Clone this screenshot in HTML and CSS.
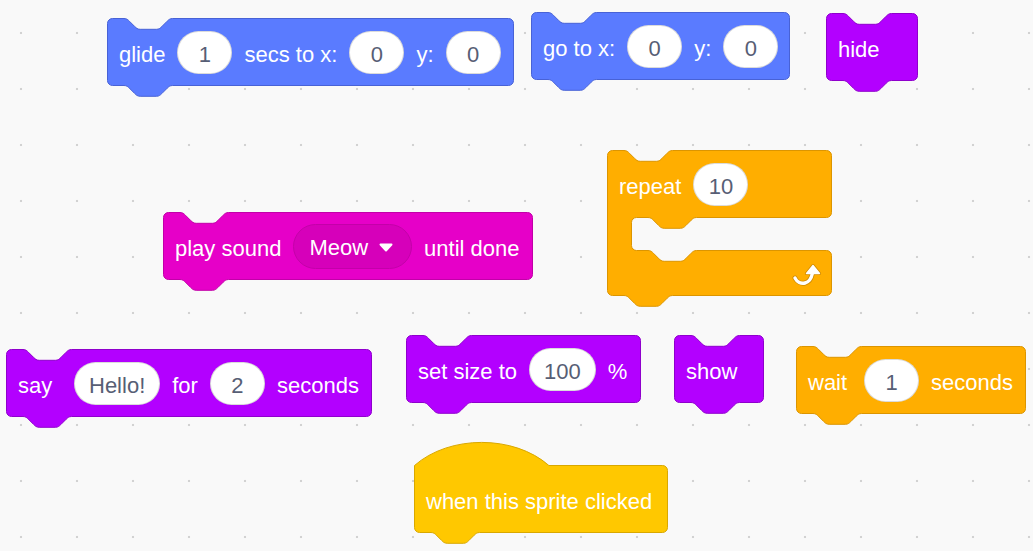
FILE: index.html
```html
<!DOCTYPE html>
<html>
<head>
<meta charset="utf-8">
<title>Blocks</title>
<link rel="stylesheet" href="styles.css">
</head>
<body>
<div class="workspace">

  <div class="block b-glide motion">
    <svg class="shape" width="407" height="80" viewBox="0 0 407 80"><path d="M0.5,5.5A5,5 0 0 1 5.5,0.5H17c2.7,0 4.05,1.35 5.4,2.7l5.4,5.4c1.35,1.35 2.7,2.7 5.4,2.7h16.2c2.7,0 4.05,-1.35 5.4,-2.7l5.4,-5.4c1.35,-1.35 2.7,-2.7 5.4,-2.7H401.5A5,5 0 0 1 406.5,5.5V62.5A5,5 0 0 1 401.5,67.5H65.6c-2.7,0 -4.05,1.35 -5.4,2.7l-5.4,5.4c-1.35,1.35 -2.7,2.7 -5.4,2.7h-16.2c-2.7,0 -4.05,-1.35 -5.4,-2.7l-5.4,-5.4c-1.35,-1.35 -2.7,-2.7 -5.4,-2.7H5.5A5,5 0 0 1 0.5,62.5Z"/></svg>
    <div class="row">
      <span class="label lead">glide</span>
      <span class="oval">1</span>
      <span class="label">secs to x:</span>
      <span class="oval">0</span>
      <span class="label">y:</span>
      <span class="oval">0</span>
    </div>
  </div>

  <div class="block b-goto motion">
    <svg class="shape" width="259" height="80" viewBox="0 0 259 80"><path d="M0.5,5.5A5,5 0 0 1 5.5,0.5H17c2.7,0 4.05,1.35 5.4,2.7l5.4,5.4c1.35,1.35 2.7,2.7 5.4,2.7h16.2c2.7,0 4.05,-1.35 5.4,-2.7l5.4,-5.4c1.35,-1.35 2.7,-2.7 5.4,-2.7H253.5A5,5 0 0 1 258.5,5.5V62.5A5,5 0 0 1 253.5,67.5H65.6c-2.7,0 -4.05,1.35 -5.4,2.7l-5.4,5.4c-1.35,1.35 -2.7,2.7 -5.4,2.7h-16.2c-2.7,0 -4.05,-1.35 -5.4,-2.7l-5.4,-5.4c-1.35,-1.35 -2.7,-2.7 -5.4,-2.7H5.5A5,5 0 0 1 0.5,62.5Z"/></svg>
    <div class="row">
      <span class="label">go to x:</span>
      <span class="oval">0</span>
      <span class="label">y:</span>
      <span class="oval">0</span>
    </div>
  </div>

  <div class="block b-hide looks">
    <svg class="shape" width="92" height="80" viewBox="0 0 92 80"><path d="M0.5,5.5A5,5 0 0 1 5.5,0.5H17c2.7,0 4.05,1.35 5.4,2.7l5.4,5.4c1.35,1.35 2.7,2.7 5.4,2.7h16.2c2.7,0 4.05,-1.35 5.4,-2.7l5.4,-5.4c1.35,-1.35 2.7,-2.7 5.4,-2.7H86.5A5,5 0 0 1 91.5,5.5V62.5A5,5 0 0 1 86.5,67.5H65.6c-2.7,0 -4.05,1.35 -5.4,2.7l-5.4,5.4c-1.35,1.35 -2.7,2.7 -5.4,2.7h-16.2c-2.7,0 -4.05,-1.35 -5.4,-2.7l-5.4,-5.4c-1.35,-1.35 -2.7,-2.7 -5.4,-2.7H5.5A5,5 0 0 1 0.5,62.5Z"/></svg>
    <div class="row">
      <span class="label">hide</span>
    </div>
  </div>

  <div class="block b-sound sound">
    <svg class="shape" width="370" height="80" viewBox="0 0 370 80"><path d="M0.5,5.5A5,5 0 0 1 5.5,0.5H17c2.7,0 4.05,1.35 5.4,2.7l5.4,5.4c1.35,1.35 2.7,2.7 5.4,2.7h16.2c2.7,0 4.05,-1.35 5.4,-2.7l5.4,-5.4c1.35,-1.35 2.7,-2.7 5.4,-2.7H364.5A5,5 0 0 1 369.5,5.5V62.5A5,5 0 0 1 364.5,67.5H65.6c-2.7,0 -4.05,1.35 -5.4,2.7l-5.4,5.4c-1.35,1.35 -2.7,2.7 -5.4,2.7h-16.2c-2.7,0 -4.05,-1.35 -5.4,-2.7l-5.4,-5.4c-1.35,-1.35 -2.7,-2.7 -5.4,-2.7H5.5A5,5 0 0 1 0.5,62.5Z"/></svg>
    <div class="row">
      <span class="label">play sound</span>
      <span class="dropdown">
        <span class="label">Meow</span>
        <svg class="caret" width="14" height="9" viewBox="0 0 14 9"><path d="M1.5,1.5H12.5L7,7.5Z"/></svg>
      </span>
      <span class="label">until done</span>
    </div>
  </div>

  <div class="block b-repeat control">
    <svg class="shape" width="225" height="158" viewBox="0 0 225 158"><path d="M0.5,5.5A5,5 0 0 1 5.5,0.5H17c2.7,0 4.05,1.35 5.4,2.7l5.4,5.4c1.35,1.35 2.7,2.7 5.4,2.7h16.2c2.7,0 4.05,-1.35 5.4,-2.7l5.4,-5.4c1.35,-1.35 2.7,-2.7 5.4,-2.7H219.5A5,5 0 0 1 224.5,5.5V62.5A5,5 0 0 1 219.5,67.5H89.6c-2.7,0 -4.05,1.35 -5.4,2.7l-5.4,5.4c-1.35,1.35 -2.7,2.7 -5.4,2.7h-16.2c-2.7,0 -4.05,-1.35 -5.4,-2.7l-5.4,-5.4c-1.35,-1.35 -2.7,-2.7 -5.4,-2.7H29.5A5,5 0 0 0 24.5,72.5V95.5A5,5 0 0 0 29.5,100.5H41c2.7,0 4.05,1.35 5.4,2.7l5.4,5.4c1.35,1.35 2.7,2.7 5.4,2.7h16.2c2.7,0 4.05,-1.35 5.4,-2.7l5.4,-5.4c1.35,-1.35 2.7,-2.7 5.4,-2.7H219.5A5,5 0 0 1 224.5,105.5V140.5A5,5 0 0 1 219.5,145.5H65.6c-2.7,0 -4.05,1.35 -5.4,2.7l-5.4,5.4c-1.35,1.35 -2.7,2.7 -5.4,2.7h-16.2c-2.7,0 -4.05,-1.35 -5.4,-2.7l-5.4,-5.4c-1.35,-1.35 -2.7,-2.7 -5.4,-2.7H5.5A5,5 0 0 1 0.5,140.5Z"/></svg>
    <div class="row">
      <span class="label">repeat</span>
      <span class="oval">10</span>
    </div>
    <svg class="loop-icon" width="30" height="24" viewBox="0 0 30 24">
      <g class="loop-outline">
        <path class="shaft" d="M3,15C5,19 9,21 13,20C17,19 19.5,15 20.5,10"/>
        <path class="head" d="M21,2.5L27.5,10.5H14.5Z"/>
      </g>
      <g class="loop-fill">
        <path class="shaft" d="M3,15C5,19 9,21 13,20C17,19 19.5,15 20.5,10"/>
        <path class="head" d="M21,2.5L27.5,10.5H14.5Z"/>
      </g>
    </svg>
  </div>

  <div class="block b-say looks">
    <svg class="shape" width="366" height="80" viewBox="0 0 366 80"><path d="M0.5,5.5A5,5 0 0 1 5.5,0.5H17c2.7,0 4.05,1.35 5.4,2.7l5.4,5.4c1.35,1.35 2.7,2.7 5.4,2.7h16.2c2.7,0 4.05,-1.35 5.4,-2.7l5.4,-5.4c1.35,-1.35 2.7,-2.7 5.4,-2.7H360.5A5,5 0 0 1 365.5,5.5V62.5A5,5 0 0 1 360.5,67.5H65.6c-2.7,0 -4.05,1.35 -5.4,2.7l-5.4,5.4c-1.35,1.35 -2.7,2.7 -5.4,2.7h-16.2c-2.7,0 -4.05,-1.35 -5.4,-2.7l-5.4,-5.4c-1.35,-1.35 -2.7,-2.7 -5.4,-2.7H5.5A5,5 0 0 1 0.5,62.5Z"/></svg>
    <div class="row">
      <span class="label lead">say</span>
      <span class="oval">Hello!</span>
      <span class="label">for</span>
      <span class="oval">2</span>
      <span class="label">seconds</span>
    </div>
  </div>

  <div class="block b-size looks">
    <svg class="shape" width="235" height="80" viewBox="0 0 235 80"><path d="M0.5,5.5A5,5 0 0 1 5.5,0.5H17c2.7,0 4.05,1.35 5.4,2.7l5.4,5.4c1.35,1.35 2.7,2.7 5.4,2.7h16.2c2.7,0 4.05,-1.35 5.4,-2.7l5.4,-5.4c1.35,-1.35 2.7,-2.7 5.4,-2.7H229.5A5,5 0 0 1 234.5,5.5V62.5A5,5 0 0 1 229.5,67.5H65.6c-2.7,0 -4.05,1.35 -5.4,2.7l-5.4,5.4c-1.35,1.35 -2.7,2.7 -5.4,2.7h-16.2c-2.7,0 -4.05,-1.35 -5.4,-2.7l-5.4,-5.4c-1.35,-1.35 -2.7,-2.7 -5.4,-2.7H5.5A5,5 0 0 1 0.5,62.5Z"/></svg>
    <div class="row">
      <span class="label">set size to</span>
      <span class="oval">100</span>
      <span class="label">%</span>
    </div>
  </div>

  <div class="block b-show looks">
    <svg class="shape" width="90" height="80" viewBox="0 0 90 80"><path d="M0.5,5.5A5,5 0 0 1 5.5,0.5H17c2.7,0 4.05,1.35 5.4,2.7l5.4,5.4c1.35,1.35 2.7,2.7 5.4,2.7h16.2c2.7,0 4.05,-1.35 5.4,-2.7l5.4,-5.4c1.35,-1.35 2.7,-2.7 5.4,-2.7H84.5A5,5 0 0 1 89.5,5.5V62.5A5,5 0 0 1 84.5,67.5H65.6c-2.7,0 -4.05,1.35 -5.4,2.7l-5.4,5.4c-1.35,1.35 -2.7,2.7 -5.4,2.7h-16.2c-2.7,0 -4.05,-1.35 -5.4,-2.7l-5.4,-5.4c-1.35,-1.35 -2.7,-2.7 -5.4,-2.7H5.5A5,5 0 0 1 0.5,62.5Z"/></svg>
    <div class="row">
      <span class="label">show</span>
    </div>
  </div>

  <div class="block b-wait control">
    <svg class="shape" width="230" height="80" viewBox="0 0 230 80"><path d="M0.5,5.5A5,5 0 0 1 5.5,0.5H17c2.7,0 4.05,1.35 5.4,2.7l5.4,5.4c1.35,1.35 2.7,2.7 5.4,2.7h16.2c2.7,0 4.05,-1.35 5.4,-2.7l5.4,-5.4c1.35,-1.35 2.7,-2.7 5.4,-2.7H224.5A5,5 0 0 1 229.5,5.5V62.5A5,5 0 0 1 224.5,67.5H65.6c-2.7,0 -4.05,1.35 -5.4,2.7l-5.4,5.4c-1.35,1.35 -2.7,2.7 -5.4,2.7h-16.2c-2.7,0 -4.05,-1.35 -5.4,-2.7l-5.4,-5.4c-1.35,-1.35 -2.7,-2.7 -5.4,-2.7H5.5A5,5 0 0 1 0.5,62.5Z"/></svg>
    <div class="row">
      <span class="label lead">wait</span>
      <span class="oval">1</span>
      <span class="label">seconds</span>
    </div>
  </div>

  <div class="block b-hat events">
    <svg class="shape" width="254" height="104" viewBox="0 0 254 104"><path d="M0.5,24.5c35,-30.8 99.4,-30.8 134.4,0H248.5A5,5 0 0 1 253.5,29.5V86.5A5,5 0 0 1 248.5,91.5H65.6c-2.7,0 -4.05,1.35 -5.4,2.7l-5.4,5.4c-1.35,1.35 -2.7,2.7 -5.4,2.7h-16.2c-2.7,0 -4.05,-1.35 -5.4,-2.7l-5.4,-5.4c-1.35,-1.35 -2.7,-2.7 -5.4,-2.7H5.5A5,5 0 0 1 0.5,86.5Z"/></svg>
    <div class="row hat-row">
      <span class="label">when this sprite clicked</span>
    </div>
  </div>

</div>
</body>
</html>
```

FILE: styles.css
```css
html, body {
  margin: 0;
  padding: 0;
  background: #f9f9f9;
}

.workspace {
  position: relative;
  width: 1033px;
  height: 551px;
  overflow: hidden;
  background-color: #f9f9f9;
  background-image: radial-gradient(circle at center, #d2d2d2 0, #d2d2d2 0.9px, rgba(210,210,210,0) 1.6px);
  background-size: 56px 56px;
  background-position: -7px 5px;
  font-family: "Liberation Sans", Arial, Helvetica, sans-serif;
}

.block {
  position: absolute;
}

.shape {
  position: absolute;
  left: 0;
  top: 0;
  overflow: visible;
}

.shape path {
  stroke-width: 1;
}

.row {
  position: relative;
  display: flex;
  align-items: center;
  gap: 12px;
  height: 68px;
  padding: 0 12px;
  color: #ffffff;
  font-size: 22px;
  white-space: nowrap;
}

.hat-row {
  margin-top: 24px;
}

.label {
  line-height: 1;
  padding-top: 6px;
}

.lead {
  min-width: 44px;
}

.oval {
  box-sizing: border-box;
  height: 43px;
  min-width: 55px;
  padding: 6px 14px 0;
  border-radius: 22px;
  background: #ffffff;
  color: #575e75;
  display: flex;
  align-items: center;
  justify-content: center;
  border: 1px solid rgba(0, 0, 0, 0.14);
}

.dropdown {
  box-sizing: border-box;
  height: 45px;
  padding: 0 18px 0 15px;
  border-radius: 23px;
  background: #d600ba;
  border: 1px solid #c400a9;
  display: flex;
  align-items: center;
  gap: 11px;
}

.dropdown .label {
  padding-top: 3px;
}

.caret {
  margin-top: 3px;
}

.caret path {
  fill: #ffffff;
  stroke: #ffffff;
  stroke-width: 2;
  stroke-linejoin: round;
}

/* categories */
.motion path { fill: #5a7bff; stroke: #4862d6; }
.looks path { fill: #b300ff; stroke: #8f00cc; }
.sound .shape path { fill: #e600c8; stroke: #c200a8; }
.control .shape path { fill: #ffae00; stroke: #dc9500; }
.events path { fill: #ffc800; stroke: #d9a800; }

/* positions on the canvas */
.b-glide { left: 107px; top: 18px; width: 407px; height: 68px; }
.b-goto { left: 531px; top: 12px; width: 259px; height: 68px; }
.b-hide { left: 826px; top: 13px; width: 92px; height: 68px; }
.b-sound { left: 163px; top: 212px; width: 370px; height: 68px; }
.b-repeat { left: 607px; top: 150px; width: 225px; height: 146px; }
.b-say { left: 6px; top: 349px; width: 366px; height: 68px; }
.b-size { left: 406px; top: 335px; width: 235px; height: 68px; }
.b-show { left: 674px; top: 335px; width: 90px; height: 68px; }
.b-wait { left: 796px; top: 346px; width: 230px; height: 68px; }
.b-hat { left: 414px; top: 441px; width: 254px; height: 92px; }

.loop-icon {
  position: absolute;
  left: 185px;
  top: 113px;
  overflow: visible;
}

.loop-outline .shaft {
  fill: none;
  stroke: #cf8a00;
  stroke-width: 5;
  stroke-linecap: round;
}

.loop-outline .head {
  fill: #cf8a00;
  stroke: #cf8a00;
  stroke-width: 3;
  stroke-linejoin: round;
}

.loop-fill .shaft {
  fill: none;
  stroke: #ffffff;
  stroke-width: 3.4;
  stroke-linecap: round;
}

.loop-fill .head {
  fill: #ffffff;
  stroke: #ffffff;
  stroke-width: 1.4;
  stroke-linejoin: round;
}
```
